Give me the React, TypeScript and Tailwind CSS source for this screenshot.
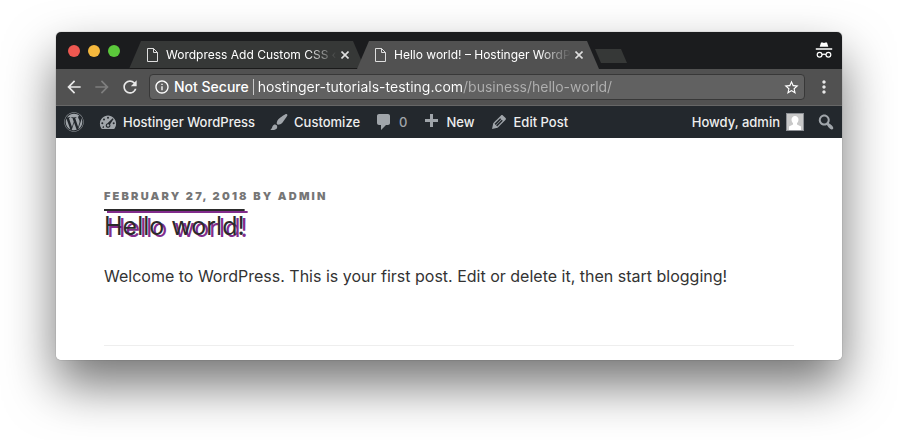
import type { ReactNode } from "react";
import { FaWordpress } from "react-icons/fa";
import { MdArrowBack, MdArrowForward, MdRefresh, MdInfoOutline, MdStarBorder, MdMoreVert } from "react-icons/md";

const icons = {
  customize:
    "M18.33 3.57s.27-.8-.31-1.36c-.53-.52-1.22-.24-1.22-.24-.61.3-5.76 3.47-7.67 5.57-.86.96-2.06 3.79-1.09 4.82.92.98 3.96-.17 4.79-1 2.06-2.06 5.21-7.17 5.5-7.79zM1.4 17.65c2.37-1.56 1.46-3.41 3.23-4.64.93-.65 2.22-.62 3.08.29.63.67.8 2.57-.16 3.46-1.57 1.45-4 1.55-6.15.89z",
  comment: "M5 2h9c1.1 0 2 .9 2 2v7c0 1.1-.9 2-2 2h-2l-5 5v-5H5c-1.1 0-2-.9-2-2V4c0-1.1.9-2 2-2z",
  plus: "M17 7v3h-5v5H9v-5H4V7h5V2h3v5h5z",
  edit: "M13.89 3.39l2.71 2.72c.46.46.42 1.24.03 1.64l-8.01 8.02-5.56 1.16 1.16-5.58s7.6-7.63 7.99-8.03c.39-.39 1.22-.39 1.68.07zm-2.73 2.79l-5.59 5.61 1.11 1.11 5.54-5.65zm-2.97 8.23l5.58-5.6-1.07-1.08-5.59 5.6z",
  search:
    "M12.14 4.18c1.87 1.87 2.11 4.75.72 6.89.12.1.22.21.36.31.2.16.47.36.81.59.34.24.56.39.66.47.42.31.73.57.94.78.32.32.6.65.84 1 .25.35.44.69.59 1.04.14.35.21.68.18 1-.02.32-.14.59-.36.81s-.49.34-.81.36c-.31.02-.65-.04-.99-.19-.35-.14-.7-.34-1.04-.59-.35-.24-.68-.52-1-.84-.21-.21-.47-.52-.77-.93-.1-.13-.25-.35-.47-.66-.22-.32-.4-.57-.56-.78-.16-.2-.29-.35-.44-.5-2.07 1.09-4.69.76-6.44-.98-2.14-2.15-2.14-5.64 0-7.78 2.15-2.15 5.63-2.15 7.78 0zm-1.41 6.36c1.36-1.37 1.36-3.58 0-4.95-1.37-1.37-3.59-1.37-4.95 0-1.37 1.37-1.37 3.58 0 4.95 1.36 1.37 3.58 1.37 4.95 0z",
};

function BarIcon({ path }: { path: string }) {
  return (
    <svg viewBox="0 0 20 20" className="size-5 shrink-0 fill-[#a0a5aa]" aria-hidden="true">
      <path d={path} />
    </svg>
  );
}

function DashboardIcon() {
  return (
    <svg viewBox="0 0 20 20" className="size-5 shrink-0" aria-hidden="true">
      <path fill="#a0a5aa" d="M3.8 17h12.4c1.2-1.5 1.9-3.3 1.9-5.2C18.1 7.2 14.5 3.5 10 3.5S1.9 7.2 1.9 11.8c0 1.9.7 3.7 1.9 5.2z" />
      <g fill="#23282d">
        <circle cx="10" cy="5.8" r="1" />
        <circle cx="6" cy="7.5" r="1" />
        <circle cx="4.3" cy="11.3" r="1" />
        <circle cx="15.7" cy="11.3" r="1" />
        <path d="M14.7 6.2l.9.8-3.5 5.3c.7 1.2.3 2.7-.9 3.3-1.3.6-2.8 0-3.3-1.2-.5-1.3.2-2.8 1.6-3.2z" />
        <path d="M5 14.2l1 .1-.2 1.7-1.4-.2z" />
      </g>
      <circle cx="10.1" cy="13.4" r="1.2" fill="#a0a5aa" />
    </svg>
  );
}

interface TabProps {
  title: string;
  active?: boolean;
}

function Tab({ title, active }: TabProps) {
  return (
    <div
      className={`flex h-7 items-center pl-[18px] pr-4 [clip-path:polygon(12px_0,calc(100%-12px)_0,100%_100%,0_100%)] ${
        active ? "z-10 -ml-2 w-[242px] bg-[#515151]" : "w-[236px] border-b border-[#1a1a1a] bg-[#363837]"
      }`}
    >
      <svg viewBox="0 0 11 14" className="h-3.5 w-[11px] shrink-0" fill="none" stroke="#dedede" aria-hidden="true">
        <path d="M.5 .5H6.5L10.5 4.5V13.5H.5zM6.5 .5V4.5H10.5" />
      </svg>
      <button
        type="button"
        role="tab"
        aria-selected={!!active}
        className="ml-2 min-w-0 flex-1 overflow-hidden whitespace-nowrap text-left text-xs text-white [mask-image:linear-gradient(to_right,#000_82%,transparent)]"
      >
        {title}
      </button>
      <button type="button" aria-label="Close tab" className="flex w-3 items-center justify-end">
        <svg viewBox="0 0 8 8" className="size-2" stroke="#dedede" strokeWidth="1.6" aria-hidden="true">
          <path d="M.5 .5L7.5 7.5M7.5 .5L.5 7.5" />
        </svg>
      </button>
    </div>
  );
}

function TabStrip() {
  return (
    <div className="flex h-[37px] items-end bg-[#1b1c1e]">
      <div className="flex gap-2 self-center pl-3 pr-[9px]">
        <span className="size-3 rounded-full bg-[#ee5851]" />
        <span className="size-3 rounded-full bg-[#f5b83d]" />
        <span className="size-3 rounded-full bg-[#5bc83b]" />
      </div>
      <div role="tablist" className="-mr-1 flex">
        <Tab title="Wordpress Add Custom CSS ‹" />
        <Tab title="Hello world! – Hostinger WordP" active />
      </div>
      <button
        type="button"
        aria-label="New tab"
        className="mb-1.5 h-3.5 w-8 bg-[#363837] [clip-path:polygon(0_0,26px_0,100%_100%,6px_100%)]"
      />
      <svg viewBox="0 0 18 18" className="mb-2.5 ml-auto mr-[9px] size-[18px]" fill="#fff" aria-label="Incognito">
        <path d="M6 1.5h1.7l1.3.5 1.3-.5H12l1.3 4.2H4.7z" />
        <path d="M.8 7.2h16.4v1.5H.8z" />
        <g fill="none" stroke="#fff" strokeWidth="1.2">
          <circle cx="4.6" cy="13.8" r="2.4" />
          <circle cx="13.4" cy="13.8" r="2.4" />
          <path d="M7 13.6Q9 12.6 11 13.6" />
        </g>
      </svg>
    </div>
  );
}

function Toolbar() {
  return (
    <div className="flex h-[37px] items-center border-b border-[#666] bg-[#515151] px-2 text-[#e8e8e8]">
      <div className="flex w-[85px] gap-2">
        <button type="button" aria-label="Back">
          <MdArrowBack size={20} />
        </button>
        <button type="button" aria-label="Forward" className="text-[#7e7e7e]">
          <MdArrowForward size={20} />
        </button>
        <button type="button" aria-label="Reload">
          <MdRefresh size={20} />
        </button>
      </div>
      <div className="flex h-[26px] min-w-0 flex-1 items-center rounded-sm border border-[#383838] bg-[#616161] px-1 text-sm text-white">
        <MdInfoOutline size={16} className="shrink-0" />
        <label htmlFor="url" className="ml-1 whitespace-nowrap font-medium">
          Not Secure
        </label>
        <span className="mx-1 h-4 w-px bg-[#c8c8c8]" />
        <input
          id="url"
          type="text"
          readOnly
          value="hostinger-tutorials-testing.com/business/hello-world/"
          className="min-w-0 flex-1 bg-[linear-gradient(to_right,#fff_205px,#b0b0b0_205px)] bg-clip-text text-transparent outline-none"
        />
        <button type="button" aria-label="Bookmark this page">
          <MdStarBorder size={17} />
        </button>
      </div>
      <button type="button" aria-label="Menu" className="ml-[9px]">
        <MdMoreVert size={20} />
      </button>
    </div>
  );
}

interface BarLinkProps {
  icon: ReactNode;
  label: string;
  muted?: boolean;
}

function BarLink({ icon, label, muted }: BarLinkProps) {
  return (
    <a href="#" className="flex items-center gap-[5px] whitespace-nowrap">
      {icon}
      <span className={muted ? "text-[#a0a5aa]" : "text-[#eee]"}>{label}</span>
    </a>
  );
}

function AdminBar() {
  return (
    <nav className="flex h-8 items-center justify-between bg-[#23282d] pl-2 pr-1.5 text-[13px] font-medium leading-4">
      <div className="flex items-center gap-3.5">
        <a href="#" aria-label="About WordPress">
          <FaWordpress size={20} color="#a0a5aa" />
        </a>
        <BarLink icon={<DashboardIcon />} label="Hostinger WordPress" />
        <BarLink icon={<BarIcon path={icons.customize} />} label="Customize" />
        <BarLink icon={<BarIcon path={icons.comment} />} label="0" muted />
        <BarLink icon={<BarIcon path={icons.plus} />} label="New" />
        <BarLink icon={<BarIcon path={icons.edit} />} label="Edit Post" />
      </div>
      <div className="flex items-center gap-3">
        <a href="#" className="flex items-center gap-1.5 text-[#eee]">
          Howdy, admin
          <svg viewBox="0 0 18 18" className="size-[18px]" aria-hidden="true">
            <path fill="#8c8f94" d="M0 0h18v18H0z" />
            <path fill="#c8c8c8" d="M1 1h16v16H1z" />
            <path fill="#fff" d="M9 3a3.5 3.5 0 0 1 3.5 3.8c-.1 1.5-.7 2.7-1.5 3.4v1.3l4 2V17H3v-3.5l4-2v-1.3c-.8-.7-1.4-1.9-1.5-3.4A3.5 3.5 0 0 1 9 3z" />
          </svg>
        </a>
        <button type="button" aria-label="Search">
          <BarIcon path={icons.search} />
        </button>
      </div>
    </nav>
  );
}

function Post() {
  return (
    <article className="bg-white px-12 pb-3.5 pt-12 text-[#333]">
      <p className="text-[11px] font-black uppercase leading-5 tracking-[0.2em] text-[#767676]">
        February 27, 2018 by admin
      </p>
      <h1 className="mt-1 text-[25px] leading-8">
        <a href="#" className="text-[#2b2b2b] overline decoration-2 [text-shadow:3px_2px_#822c8c]">
          Hello world!
        </a>
      </h1>
      <p className="mt-[22px] text-base leading-6">
        Welcome to WordPress. This is your first post. Edit or delete it, then start blogging!
      </p>
      <hr className="mt-[57px] border-[#eee]" />
    </article>
  );
}

export default function App() {
  return (
    <main className="bg-white px-14 pb-20 pt-8 font-[Inter,sans-serif]">
      <div className="overflow-hidden rounded-[5px] shadow-[0_25px_50px_rgba(0,0,0,0.55),0_0_1px_rgba(0,0,0,0.6)]">
        <TabStrip />
        <Toolbar />
        <AdminBar />
        <Post />
      </div>
    </main>
  );
}
